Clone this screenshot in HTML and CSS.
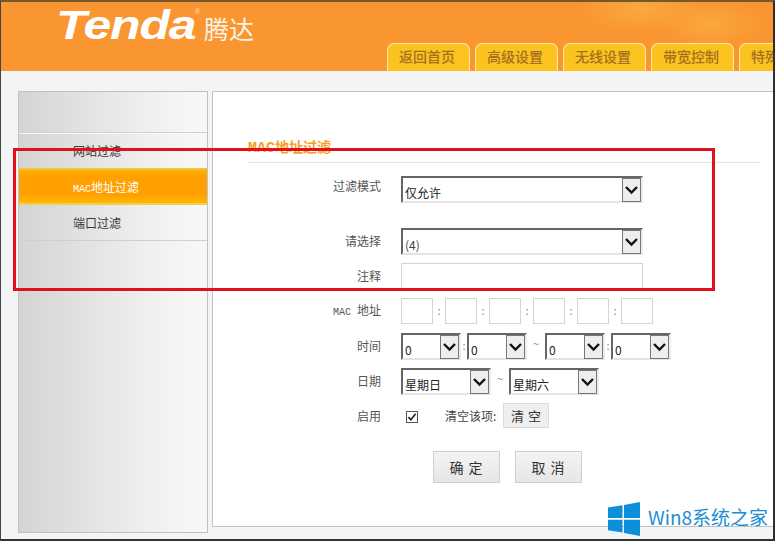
FILE: index.html
```html
<!DOCTYPE html>
<html lang="zh-CN">
<head>
<meta charset="utf-8">
<title>Tenda 腾达</title>
<link rel="stylesheet" href="styles.css">
</head>
<body>
<div class="page">
  <header class="header">
    <div class="logo"><span class="logo-word">Tenda</span><span class="logo-reg">®</span><span class="logo-cn">腾达</span></div>
    <nav class="tabs">
      <a class="tab">返回首页</a>
      <a class="tab">高级设置</a>
      <a class="tab">无线设置</a>
      <a class="tab">带宽控制</a>
      <a class="tab">特殊应用</a>
    </nav>
  </header>
  <div class="content">
    <aside class="sidebar">
      <a class="side-item">网站过滤</a>
      <a class="side-item active"><span class="mono">MAC</span>地址过滤</a>
      <a class="side-item last">端口过滤</a>
    </aside>
    <main class="panel">
      <h1 class="title"><span class="mono">MAC</span>地址过滤</h1>
      <div class="form">
        <label class="lbl lbl-first">过滤模式</label>
        <div class="ctrl">
          <div class="sel w-full"><span class="sel-text">仅允许</span><span class="arrow"><svg viewBox="0 0 17 22" width="17" height="22"><path d="M3 8l5.5 5.5L14 8" fill="none" stroke="#111" stroke-width="2.4"/></svg></span></div>
        </div>
        <div class="spacer"></div>
        <label class="lbl">请选择</label>
        <div class="ctrl">
          <div class="sel w-full"><span class="sel-text dim">(4)</span><span class="arrow"><svg viewBox="0 0 17 22" width="17" height="22"><path d="M3 8l5.5 5.5L14 8" fill="none" stroke="#111" stroke-width="2.4"/></svg></span></div>
        </div>
        <label class="lbl">注释</label>
        <div class="ctrl"><input class="inp w-full" type="text"></div>
        <label class="lbl lbl-mac"><span class="mono">MAC </span>地址</label>
        <div class="ctrl">
          <input class="inp w-mac" type="text"><span class="sep s12">:</span>
          <input class="inp w-mac" type="text"><span class="sep s12">:</span>
          <input class="inp w-mac" type="text"><span class="sep s12">:</span>
          <input class="inp w-mac" type="text"><span class="sep s12">:</span>
          <input class="inp w-mac" type="text"><span class="sep s12">:</span>
          <input class="inp w-mac" type="text">
        </div>
        <label class="lbl">时间</label>
        <div class="ctrl">
          <div class="sel w-time"><span class="sel-text">0</span><span class="arrow"><svg viewBox="0 0 17 22" width="17" height="22"><path d="M3 8l5.5 5.5L14 8" fill="none" stroke="#111" stroke-width="2.4"/></svg></span></div>
          <span class="sep s6">:</span>
          <div class="sel w-time"><span class="sel-text">0</span><span class="arrow"><svg viewBox="0 0 17 22" width="17" height="22"><path d="M3 8l5.5 5.5L14 8" fill="none" stroke="#111" stroke-width="2.4"/></svg></span></div>
          <span class="sep s18 tilde">~</span>
          <div class="sel w-time"><span class="sel-text">0</span><span class="arrow"><svg viewBox="0 0 17 22" width="17" height="22"><path d="M3 8l5.5 5.5L14 8" fill="none" stroke="#111" stroke-width="2.4"/></svg></span></div>
          <span class="sep s6">:</span>
          <div class="sel w-time"><span class="sel-text">0</span><span class="arrow"><svg viewBox="0 0 17 22" width="17" height="22"><path d="M3 8l5.5 5.5L14 8" fill="none" stroke="#111" stroke-width="2.4"/></svg></span></div>
        </div>
        <label class="lbl">日期</label>
        <div class="ctrl">
          <div class="sel w-date"><span class="sel-text">星期日</span><span class="arrow"><svg viewBox="0 0 17 22" width="17" height="22"><path d="M3 8l5.5 5.5L14 8" fill="none" stroke="#111" stroke-width="2.4"/></svg></span></div>
          <span class="sep s18 tilde">~</span>
          <div class="sel w-date"><span class="sel-text">星期六</span><span class="arrow"><svg viewBox="0 0 17 22" width="17" height="22"><path d="M3 8l5.5 5.5L14 8" fill="none" stroke="#111" stroke-width="2.4"/></svg></span></div>
        </div>
        <label class="lbl lbl-check">启用</label>
        <div class="ctrl">
          <span class="check"><svg viewBox="0 0 10 10" width="10" height="10"><path d="M1.5 5.2l2.4 2.6L8.6 1.8" fill="none" stroke="#222" stroke-width="1.7"/></svg></span>
          <span class="clear-label">清空该项:</span>
          <button class="btn-clear" type="button">清 空</button>
        </div>
        <div class="actions">
          <button class="btn" type="button">确 定</button>
          <button class="btn" type="button">取 消</button>
        </div>
      </div>
    </main>
  </div>
  <div class="annotation"></div>
  <div class="watermark">
    <svg class="win-logo" viewBox="0 0 32 34" width="32" height="34"><path fill="#0c8fd8" d="M0 5.5L14.5 3.2V16H0zM16 3L32 0V16H16zM0 17.8H14.5V30.5L0 28.2zM16 17.8H32V34L16 31z"/></svg>
    <span class="win-text">Win8系统之家</span>
  </div>
</div>
</body>
</html>
```

FILE: styles.css
```css
* { box-sizing: border-box; }
html, body { margin: 0; padding: 0; }
body {
  font-family: "Noto Sans CJK SC", "Liberation Sans", sans-serif;
  font-size: 12px;
  color: #444;
  background: #333;
}
.page {
  position: relative;
  width: 775px;
  height: 541px;
  overflow: hidden;
  display: flex;
  flex-direction: column;
  background: #f3f4f5;
  border-style: solid;
  border-color: #75572e #2f2f2f #333 #444;
  border-width: 2px 2px 2px 1px;
}
.mono { font-family: "Liberation Mono", monospace; font-size: 10px; white-space: pre; }

.header {
  flex: none;
  height: 69px;
  display: flex;
  background:
    radial-gradient(ellipse 60px 26px at 640px 6px, #fba93f 0, rgba(251,169,63,0) 100%),
    radial-gradient(ellipse 50px 24px at 710px 22px, #fba83e 0, rgba(251,168,62,0) 100%),
    #f99632;
}
.logo {
  flex: none;
  width: 386px;
  padding: 1px 0 0 55px;
  display: flex;
  align-items: flex-start;
  color: #fff;
}
.logo-word {
  font: italic bold 41px/44px "Liberation Sans", sans-serif;
  letter-spacing: -1px;
  display: block;
  width: 132px;
  transform: scaleX(1.22);
  transform-origin: left top;
}
.logo-reg { font: 7px/10px "Liberation Sans", sans-serif; margin: 4px 0 0 7px; width: 9px; color: #fde3c4; }
.logo-cn { font-size: 25px; line-height: 32px; margin-top: 9px; color: #fdf3e6; letter-spacing: 0; }

.tabs { display: flex; gap: 5px; padding-top: 41px; flex: none; }
.tab {
  flex: none;
  width: 83px;
  height: 28px;
  padding-right: 3px;
  background: #fac31f;
  border: 1px solid #fde7a6;
  border-bottom: 0;
  border-radius: 7px 7px 0 0;
  color: #a66f20;
  font-size: 14px;
  font-weight: 500;
  line-height: 25px;
  text-align: center;
}

.content {
  flex: 1;
  display: flex;
  align-items: flex-start;
  gap: 4px;
  padding: 20px 0 0 17px;
}
.sidebar {
  flex: none;
  width: 190px;
  height: 442px;
  padding-top: 40px;
  border: 1px solid #c2c2c2;
  background: linear-gradient(90deg, #d4d4d4 0, #e2e2e2 35%, #f0f0f0 70%, #f8f8f8 100%);
}
.side-item {
  display: block;
  height: 36px;
  padding-left: 54px;
  border-top: 1px solid #cfcfcf;
  color: #3a3a3a;
  font-size: 12px;
  line-height: 36px;
  box-shadow: inset 0 1px 0 #fafafa;
}
.side-item.last {
  border-top: 0;
  border-bottom: 1px solid #cfcfcf;
  line-height: 35px;
  box-shadow: none;
}
.side-item.active {
  height: 37px;
  border-top: 2px solid #eec445;
  border-bottom: 2px solid #f0cf4c;
  background: linear-gradient(180deg, #ffb100 0, #ff9f00 20%, #ffa000 75%, #ffb800 100%);
  color: #fff;
  box-shadow: none;
  line-height: 34px;
}
.panel {
  flex: none;
  width: 561px;
  height: 436px;
  padding: 47px 13px 0 35px;
  background: #fff;
  border: 1px solid #c2c2c2;
  border-right: 0;
}
.title {
  margin: 0;
  height: 24px;
  border-bottom: 1px solid #e4e4e4;
  color: #f5a31f;
  font-size: 14px;
  font-weight: 700;
  line-height: 15px;
}
.title .mono { font-size: 15px; }
.form {
  display: grid;
  grid-template-columns: 133px auto;
  grid-auto-rows: auto;
  column-gap: 20px;
  row-gap: 8px;
  margin-top: 13px;
}
.spacer { grid-column: 1 / -1; height: 9px; }
.lbl { text-align: right; line-height: 25px; color: #555; height: 27px; }
.lbl-first { line-height: 19px; }
.lbl-mac { line-height: 24px; }
.lbl-check { line-height: 26px; }
.ctrl { display: flex; align-items: flex-start; height: 27px; }

.sel {
  flex: none;
  height: 27px;
  display: flex;
  justify-content: space-between;
  background: #fff;
  border-style: solid;
  border-color: #666 #ececec #e4e4e4 #666;
  border-width: 2px;
}
.sel-text {
  align-self: flex-end;
  padding-left: 2px;
  color: #222;
  font-size: 12px;
  line-height: 17px;
}
.sel-text.dim { color: #444; }
.arrow {
  flex: none;
  width: 19px;
  height: 24px;
  background: #eeeeee;
  border: 1px solid #777;
  display: flex;
  align-items: center;
  justify-content: center;
}
.w-full { width: 242px; }
.w-time { width: 60px; }
.w-date { width: 90px; }
.w-mac { width: 32px; }
.inp {
  flex: none;
  height: 26px;
  margin: 0;
  padding: 0;
  background: #fff;
  border: 1px solid #d4d4d4;
  outline: 0;
}
.sep {
  flex: none;
  text-align: center;
  color: #888;
  font-size: 11px;
  line-height: 25px;
}
.s12 { width: 12px; }
.s6 { width: 6px; }
.s18 { width: 18px; }
.tilde { line-height: 20px; }

.check {
  flex: none;
  width: 12px;
  height: 12px;
  margin: 8px 27px 0 5px;
  display: flex;
  align-items: center;
  justify-content: center;
  background: #fff;
  border: 1px solid #555;
}
.clear-label { flex: none; width: 58px; line-height: 25px; color: #444; }
.btn-clear {
  flex: none;
  width: 46px;
  height: 25px;
  padding: 0;
  background: #efefef;
  border: 1px solid #dcdcdc;
  color: #333;
  font: 13px/21px "Noto Sans CJK SC", sans-serif;
  word-spacing: 1px;
}
.actions {
  grid-column: 2;
  display: flex;
  gap: 15px;
  padding: 13px 0 0 32px;
}
.btn {
  flex: none;
  width: 67px;
  height: 32px;
  padding: 0;
  background: linear-gradient(180deg, #f4f4f4, #e6e6e6);
  border: 1px solid #cfcfcf;
  color: #333;
  font: 14px/28px "Noto Sans CJK SC", sans-serif;
  letter-spacing: 1px;
}

.annotation {
  position: absolute;
  left: 12px;
  top: 146px;
  width: 702px;
  height: 143px;
  border: 3px solid #e2101c;
}
.watermark {
  position: absolute;
  left: 607px;
  top: 500px;
  display: flex;
  align-items: flex-start;
  gap: 8px;
}
.win-text {
  color: #1a8fd2;
  font-size: 19px;
  line-height: 24px;
  margin-top: 3px;
  white-space: nowrap;
}
```
